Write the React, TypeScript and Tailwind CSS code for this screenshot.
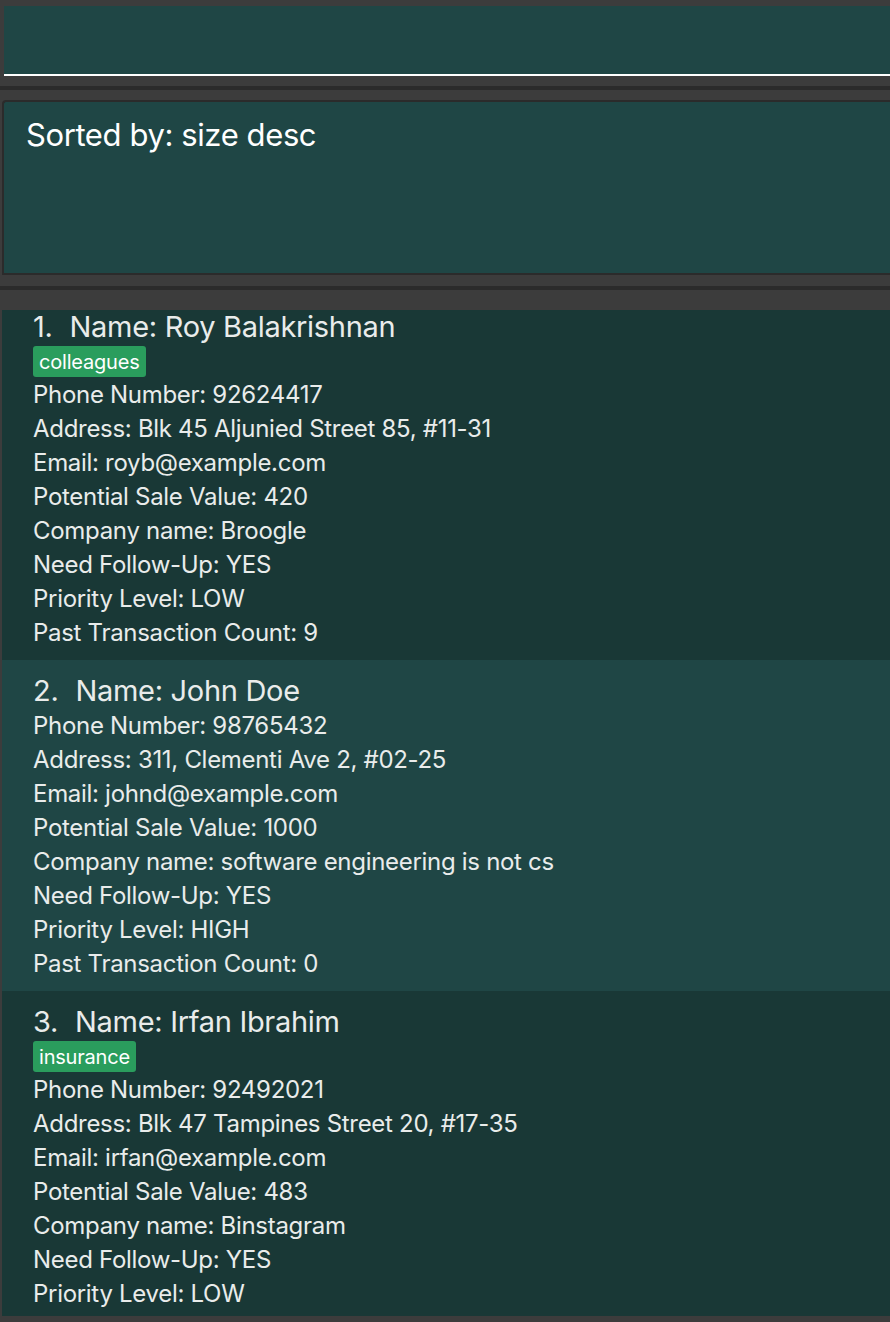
import React from 'react';

interface Person {
  name: string;
  tags: string[];
  phone: string;
  address: string;
  email: string;
  saleValue: string;
  company: string;
  followUp: string;
  priority: string;
  pastCount: string;
}

const people: Person[] = [
  {
    name: 'Roy Balakrishnan',
    tags: ['colleagues'],
    phone: '92624417',
    address: 'Blk 45 Aljunied Street 85, #11-31',
    email: 'royb@example.com',
    saleValue: '420',
    company: 'Broogle',
    followUp: 'YES',
    priority: 'LOW',
    pastCount: '9',
  },
  {
    name: 'John Doe',
    tags: [],
    phone: '98765432',
    address: '311, Clementi Ave 2, #02-25',
    email: 'johnd@example.com',
    saleValue: '1000',
    company: 'software engineering is not cs',
    followUp: 'YES',
    priority: 'HIGH',
    pastCount: '0',
  },
  {
    name: 'Irfan Ibrahim',
    tags: ['insurance'],
    phone: '92492021',
    address: 'Blk 47 Tampines Street 20, #17-35',
    email: 'irfan@example.com',
    saleValue: '483',
    company: 'Binstagram',
    followUp: 'YES',
    priority: 'LOW',
    pastCount: '3',
  },
];

const PersonCard: React.FC<{ person: Person; index: number }> = ({ person, index }) => {
  const bg = index % 2 === 0 ? 'bg-[#193836]' : 'bg-[#1f4645]';
  const rows = [
    `Phone Number: ${person.phone}`,
    `Address: ${person.address}`,
    `Email: ${person.email}`,
    `Potential Sale Value: ${person.saleValue}`,
    `Company name: ${person.company}`,
    `Need Follow-Up: ${person.followUp}`,
    `Priority Level: ${person.priority}`,
    `Past Transaction Count: ${person.pastCount}`,
  ];

  return (
    <div className={`${bg} pl-[31px] pt-[13px] pb-[10px] text-[#e9eceb]`}>
      <div className="flex h-[36px] items-center text-[29px] tracking-[-0.3px]">
        <span>{index + 1}.</span>
        <span className="ml-[17px]">Name: {person.name}</span>
      </div>
      {person.tags.length > 0 && (
        <div className="flex h-[33px] gap-2 pt-[1px]">
          {person.tags.map((tag) => (
            <span
              key={tag}
              className="flex h-[31px] items-center rounded-[3px] bg-[#2a9d5d] px-[6px] text-[20px] tracking-[-0.2px] text-white"
            >
              {tag}
            </span>
          ))}
        </div>
      )}
      {rows.map((row) => (
        <div key={row} className="flex h-[34px] items-center text-[24px] tracking-[-0.3px]">
          {row}
        </div>
      ))}
    </div>
  );
};

export default function App() {
  return (
    <div
      className="flex h-[1322px] w-[890px] flex-col overflow-hidden bg-[#3c3c3c]"
      style={{ fontFamily: 'Inter, "Noto Sans", sans-serif' }}
    >
      {/* command box */}
      <div className="pl-[4px] pt-[6px]">
        <div className="h-[70px] border-b-2 border-white bg-[#1f4645]" />
      </div>

      <div className="mt-[10px] h-[4px] bg-[#2b2b2b]" />

      {/* result display */}
      <div className="pl-[2px] pt-[10px]">
        <div className="h-[175px] rounded-tl-[4px] border-y-2 border-l-2 border-[#2b2b2b] bg-[#1f4645] pl-[22px] pt-[15px]">
          <div className="text-[31px] leading-[36px] tracking-[-0.4px] text-white">Sorted by: size desc</div>
        </div>
      </div>

      <div className="mt-[11px] h-[4px] bg-[#2b2b2b]" />

      {/* person list */}
      <div className="mt-[20px] min-h-0 flex-1 overflow-hidden pl-[2px]">
        <div className="-mt-[14px]">
          {people.map((p, i) => (
            <PersonCard key={p.name} person={p} index={i} />
          ))}
        </div>
      </div>
      <div className="h-[6px] shrink-0" />
    </div>
  );
}
